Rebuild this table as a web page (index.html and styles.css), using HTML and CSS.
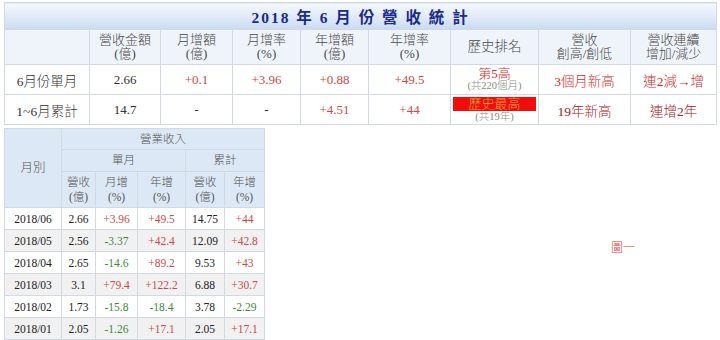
FILE: index.html
```html
<!DOCTYPE html>
<html lang="zh-Hant">
<head>
<meta charset="utf-8">
<title>2018 年 6 月份營收統計</title>
<link rel="stylesheet" href="styles.css">
</head>
<body>
<div class="page">
  <table class="summary">
    <colgroup>
      <col class="c1"><col class="c2"><col class="c3"><col class="c4"><col class="c5">
      <col class="c6"><col class="c7"><col class="c8"><col class="c9">
    </colgroup>
    <tr class="title-row">
      <th colspan="9" class="title">2018&nbsp;年&nbsp;6&nbsp;月&nbsp;份&nbsp;營&nbsp;收&nbsp;統&nbsp;計</th>
    </tr>
    <tr class="head-row">
      <th></th>
      <th>營收金額<br>(億)</th>
      <th>月增額<br>(億)</th>
      <th>月增率<br>(%)</th>
      <th>年增額<br>(億)</th>
      <th>年增率<br>(%)</th>
      <th class="one">歷史排名</th>
      <th>營收<br>創高/創低</th>
      <th>營收連續<br>增加/減少</th>
    </tr>
    <tr class="data-row">
      <td class="label">6月份單月</td>
      <td>2.66</td>
      <td class="up">+0.1</td>
      <td class="up">+3.96</td>
      <td class="up">+0.88</td>
      <td class="up">+49.5</td>
      <td class="rank"><span class="rank-main">第5高</span><span class="rank-sub">(共220個月)</span></td>
      <td class="hot">3個月新高</td>
      <td class="hot">連2減→增</td>
    </tr>
    <tr class="data-row">
      <td class="label">1~6月累計</td>
      <td>14.7</td>
      <td class="dash">-</td>
      <td class="dash">-</td>
      <td class="up">+4.51</td>
      <td class="up">+44</td>
      <td class="rank"><span class="rank-top">歷史最高</span><span class="rank-sub">(共19年)</span></td>
      <td class="warm">19年新高</td>
      <td class="warm">連增2年</td>
    </tr>
  </table>

  <div class="lower">
    <table class="monthly">
      <colgroup>
        <col class="m1"><col class="m2"><col class="m3"><col class="m4"><col class="m5"><col class="m6">
      </colgroup>
      <tr class="h1">
        <th rowspan="3" class="month-head">月別</th>
        <th colspan="5">營業收入</th>
      </tr>
      <tr class="h2">
        <th colspan="3">單月</th>
        <th colspan="2">累計</th>
      </tr>
      <tr class="h3">
        <th>營收<br>(億)</th>
        <th>月增<br>(%)</th>
        <th>年增<br>(%)</th>
        <th>營收<br>(億)</th>
        <th>年增<br>(%)</th>
      </tr>
      <tr><td>2018/06</td><td>2.66</td><td class="up">+3.96</td><td class="up">+49.5</td><td>14.75</td><td class="up">+44</td></tr>
      <tr class="alt"><td>2018/05</td><td>2.56</td><td class="down">-3.37</td><td class="up">+42.4</td><td>12.09</td><td class="up">+42.8</td></tr>
      <tr><td>2018/04</td><td>2.65</td><td class="down">-14.6</td><td class="up">+89.2</td><td>9.53</td><td class="up">+43</td></tr>
      <tr class="alt"><td>2018/03</td><td>3.1</td><td class="up">+79.4</td><td class="up">+122.2</td><td>6.88</td><td class="up">+30.7</td></tr>
      <tr><td>2018/02</td><td>1.73</td><td class="down">-15.8</td><td class="down">-18.4</td><td>3.78</td><td class="down">-2.29</td></tr>
      <tr class="alt"><td>2018/01</td><td>2.05</td><td class="down">-1.26</td><td class="up">+17.1</td><td>2.05</td><td class="up">+17.1</td></tr>
    </table>
    <div class="caption">圖一</div>
  </div>
</div>
</body>
</html>
```
FILE: styles.css
```css
html, body {
  margin: 0;
  padding: 0;
  background: #ffffff;
}
body {
  font-family: "Liberation Serif", "Noto Sans CJK TC", serif;
  font-weight: 300;
  color: #333333;
}
.page {
  padding: 2px 4px 0 4px;
}
table {
  border-collapse: collapse;
  table-layout: fixed;
}
th, td {
  padding: 0;
  text-align: center;
  vertical-align: middle;
}

/* ---------- summary table ---------- */
.summary {
  width: 712px;
  border: 1px solid #cdd6e2;
}
.summary .c1 { width: 85px; }
.summary .c2 { width: 71px; }
.summary .c3 { width: 72px; }
.summary .c4 { width: 68px; }
.summary .c5 { width: 68px; }
.summary .c6 { width: 82px; }
.summary .c7 { width: 88px; }
.summary .c8 { width: 92px; }
.summary .c9 { width: 86px; }

.summary th, .summary td {
  border: 1px solid #d3d9e2;
}
.title-row { height: 27px; }
.title {
  background: linear-gradient(#f5f8fd 0%, #e3ecf8 45%, #c9dbf2 100%);
  color: #1c2a8c;
  font-size: 15.5px;
  font-weight: bold;
  letter-spacing: 2px;
}
.head-row { height: 35px; }
.head-row th {
  background: #eff4fb;
  font-weight: 300;
  font-size: 13px;
  line-height: 14px;
  color: #4a4a4a;
}
.head-row th.one { font-size: 13.5px; }
.data-row { height: 30px; }
.data-row td {
  font-size: 13px;
  color: #333333;
}
.data-row td.label { font-size: 13.5px; color: #333333; }
.up { color: #cc4a4a; }
.down { color: #3d8a3d; }
.dash { color: #555555; }
.data-row td.hot, .data-row td.warm { font-size: 13.5px; }
.data-row td.up { color: #cc4a4a; }
.data-row td.hot { color: #d42a2a; }
.data-row td.warm { color: #a82020; }
.rank {
  line-height: 13px;
}
.rank-main {
  display: block;
  color: #d42a2a;
  font-size: 13px;
}
.rank-sub {
  display: block;
  color: #8a8a8a;
  font-size: 10.5px;
  line-height: 12px;
}
.rank-top {
  display: block;
  margin: 0 2px;
  background: #f20c0c;
  color: #f2a23a;
  font-size: 13px;
  line-height: 14px;
}

/* ---------- monthly table ---------- */
.lower {
  display: flex;
  align-items: flex-start;
  margin-top: 3px;
}
.monthly {
  width: 260px;
  border: 1px solid #cfd7e2;
}
.monthly .m1 { width: 57px; }
.monthly .m2 { width: 34px; }
.monthly .m3 { width: 42px; }
.monthly .m4 { width: 48px; }
.monthly .m5 { width: 39px; }
.monthly .m6 { width: 40px; }
.monthly th, .monthly td {
  border: 1px solid #d3d9e2;
}
.monthly th {
  background: #dde8f6;
  font-weight: 300;
  color: #555555;
  font-size: 11.5px;
  line-height: 15px;
}
.monthly .month-head { font-size: 12.5px; }
.monthly .h1 { height: 21px; }
.monthly .h2 { height: 22px; }
.monthly .h3 { height: 36px; }
.monthly td {
  height: 21px;
  font-size: 11.5px;
  color: #222222;
  background: #ffffff;
}
.monthly tr.alt td { background: #f1f1f1; }
.monthly td.up { color: #cc4a4a; }
.monthly td.down { color: #3d8a3d; }

.caption {
  margin-left: 346px;
  margin-top: 110px;
  color: #e23a3a;
  font-size: 12px;
  font-family: "Noto Sans CJK TC", sans-serif;
}
```
